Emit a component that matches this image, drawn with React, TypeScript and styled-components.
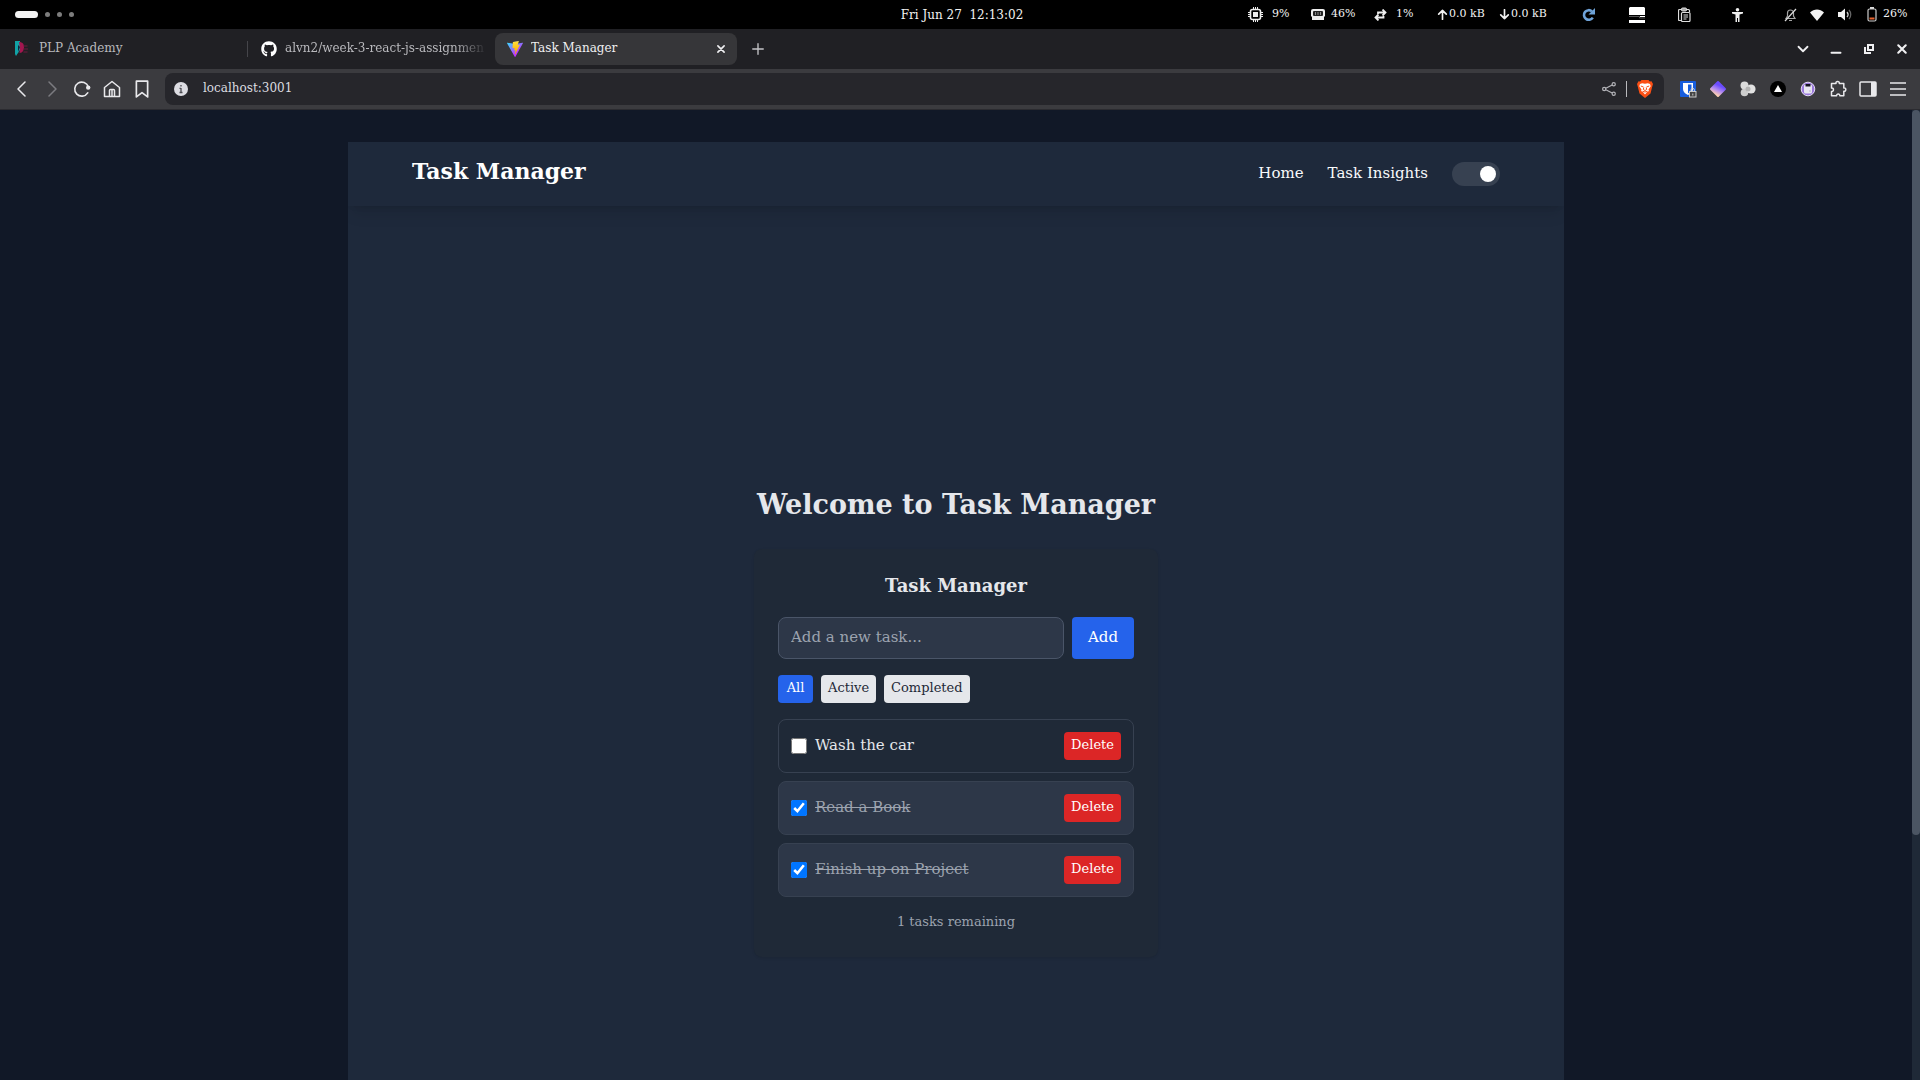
import React, { useEffect, useRef, useState } from "react";
import styled, { createGlobalStyle, css } from "styled-components";
import { FaGithub } from "react-icons/fa";

const GlobalStyle = createGlobalStyle`
  *, *::before, *::after { box-sizing: border-box; }
  body { margin: 0; background: #111827; }
  body, button, input {
    font-family: "DejaVu Serif", "Liberation Serif", serif;
  }
  button { border: 0; padding: 0; background: none; color: inherit; cursor: pointer; }
  a { color: inherit; text-decoration: none; }
  h1, h2, p, ul { margin: 0; padding: 0; }
  svg { display: block; flex: none; }
`;

/* ---------- desktop shell ---------- */

const Shell = styled.div`
  display: flex;
  flex-direction: column;
  height: 100vh;
  overflow: hidden;
`;

const SystemBar = styled.header`
  display: grid;
  grid-template-columns: 1fr auto 1fr;
  align-items: center;
  height: 29px;
  flex: none;
  padding: 0 11px 0 15px;
  background: #000;
  color: #f2f2f2;
`;

const Workspaces = styled.div`
  display: flex;
  align-items: center;
  gap: 7px;
`;

const Workspace = styled.span<{ $current?: boolean }>`
  width: ${(p) => (p.$current ? "23px" : "5px")};
  height: ${(p) => (p.$current ? "7px" : "5px")};
  border-radius: 4px;
  background: ${(p) => (p.$current ? "#f2f2f2" : "#7d7d7d")};
`;

const Clock = styled.time`
  font-size: 12px;
  line-height: 16px;
  white-space: pre;
`;

const StatusArea = styled.div`
  display: grid;
  justify-content: end;
  align-items: center;
  grid-template-columns: 63px 63px 63px 62px 83px 47px 49px 54px 52px 26px 28px 29px 42px;
`;

const Status = styled.span<{ $gap?: number }>`
  display: flex;
  align-items: center;
  gap: ${(p) => p.$gap ?? 6}px;
  font-size: 11px;
  line-height: 16px;
  white-space: nowrap;
`;

const StatusText = styled.span`
  padding-bottom: 2px;
`;

/* ---------- browser chrome ---------- */

const TabStrip = styled.nav`
  display: flex;
  align-items: center;
  height: 40px;
  flex: none;
  padding-right: 8px;
  background: #202024;
  color: #b9b9bd;
`;

const Tab = styled.div<{ $active?: boolean; $divided?: boolean }>`
  display: flex;
  align-items: center;
  gap: 8px;
  width: 247px;
  height: 32px;
  padding: 0 8px 0 13px;
  ${(p) =>
    p.$divided &&
    css`
      width: 248px;
      padding-left: 14px;
      background: linear-gradient(#45454a, #45454a) right center / 1px 16px no-repeat;
    `}
  ${(p) =>
    p.$active &&
    css`
      width: 242px;
      padding: 0 11px 0 12px;
      border-radius: 8px;
      background: #363639;
      color: #f0f0f2;
    `}
`;

const TabTitle = styled.a<{ $faded?: boolean }>`
  flex: 1;
  min-width: 0;
  overflow: hidden;
  white-space: nowrap;
  padding-bottom: 3px;
  font-size: 12px;
  line-height: 16px;
  ${(p) =>
    p.$faded &&
    css`
      mask-image: linear-gradient(to right, #000 84%, transparent 100%);
    `}
`;

const IconButton = styled.button<{ $size?: number }>`
  display: grid;
  place-items: center;
  flex: none;
  width: ${(p) => p.$size ?? 30}px;
  height: 24px;
`;

const CloseTab = styled(IconButton)`
  width: 10px;
`;

const NewTab = styled(IconButton)`
  margin-left: 6px;
  color: #c4c4c8;
`;

const WindowControls = styled.div`
  display: flex;
  gap: 3px;
  margin-left: auto;
  margin-right: -5px;
  color: #f0f0f2;
`;

const Toolbar = styled.div`
  display: flex;
  align-items: center;
  height: 41px;
  flex: none;
  padding: 0 7px;
  border-bottom: 1px solid #2b2b30;
  background: #3b3b3f;
  color: #e9e9ec;
`;

const AddressBar = styled.label`
  display: flex;
  align-items: center;
  flex: 1;
  height: 32px;
  margin: 0 9px 0 8px;
  padding: 0 10px 0 9px;
  border-radius: 8px;
  background: #26262b;
`;

const AddressInput = styled.input`
  flex: 1;
  min-width: 0;
  margin-left: 15px;
  padding: 0 0 3px;
  border: 0;
  outline: 0;
  background: none;
  color: #dcdce0;
  font-size: 12px;
  line-height: 20px;
`;

const AddressDivider = styled.span`
  width: 1px;
  height: 16px;
  margin: 0 9px 0 2px;
  background: #b9b9bd;
`;

const PageArea = styled.div`
  display: flex;
  flex: 1;
  min-height: 0;
`;

const Viewport = styled.div`
  flex: 1;
  overflow-y: auto;
  scrollbar-width: none;
  background: #111827;
`;

const ScrollTrack = styled.div`
  width: 8px;
  flex: none;
  background: #1f2937;
`;

const ScrollThumb = styled.div`
  height: 75%;
  border-radius: 4px;
  background: #4b5563;
`;

/* ---------- task manager page ---------- */

const Page = styled.div`
  max-width: 1280px;
  margin: 0 auto;
  padding: 32px 32px 167px;
`;

const Panel = styled.div`
  overflow: hidden;
  background: #1e293b;
`;

const NavBar = styled.header`
  display: flex;
  align-items: center;
  justify-content: space-between;
  height: 64px;
  padding: 0 64px;
  background: #1e293b;
  box-shadow: 0 10px 15px -3px rgba(0, 0, 0, 0.1), 0 4px 6px -4px rgba(0, 0, 0, 0.1);
  color: #fff;
`;

const Brand = styled.a`
  padding-bottom: 6px;
  font-size: 22px;
  font-weight: 700;
  line-height: 32px;
`;

const NavLinks = styled.nav`
  display: flex;
  align-items: center;
  gap: 24px;
`;

const NavLink = styled.a`
  padding-bottom: 2px;
  font-size: 15px;
  line-height: 24px;
  color: #f8fafc;
`;

const ThemeToggle = styled.input`
  appearance: none;
  display: flex;
  align-items: center;
  width: 48px;
  height: 24px;
  margin: 0;
  padding: 4px;
  border-radius: 12px;
  background: #374151;
  cursor: pointer;

  &::before {
    content: "";
    width: 16px;
    height: 16px;
    border-radius: 50%;
    background: #fff;
  }
  &:checked::before {
    margin-left: auto;
  }
`;

const Main = styled.main`
  box-sizing: content-box;
  display: flex;
  align-items: center;
  justify-content: center;
  min-height: calc(100vh - 110px);
  padding: 32px 0;
`;

const Welcome = styled.section`
  display: flex;
  flex-direction: column;
  gap: 24px;
  width: 404px;
  color: #e5e7eb;
`;

const PageTitle = styled.h1`
  padding-bottom: 4px;
  font-size: 27px;
  line-height: 32px;
  text-align: center;
  white-space: nowrap;
`;

const Card = styled.section`
  padding: 24px;
  border-radius: 8px;
  background: #1f2937;
  box-shadow: 0 1px 3px rgba(0, 0, 0, 0.1);
`;

const CardTitle = styled.h2`
  margin-bottom: 16px;
  padding-bottom: 2px;
  font-size: 18px;
  line-height: 26px;
  text-align: center;
`;

const AddForm = styled.form`
  display: flex;
  gap: 8px;
  margin-bottom: 16px;
`;

const TaskInput = styled.input`
  flex: 1;
  min-width: 0;
  height: 42px;
  padding: 0 12px 2px;
  border: 1px solid #4a5568;
  border-radius: 8px;
  outline: 0;
  background: #2d3748;
  color: #e5e7eb;
  font-size: 15px;

  &::placeholder {
    color: #9ca3af;
    opacity: 1;
  }
`;

const AddButton = styled.button`
  padding: 0 16px 2px;
  border-radius: 4px;
  background: #2563eb;
  color: #fff;
  font-size: 15px;
`;

const Filters = styled.div`
  display: flex;
  gap: 8px;
  margin-bottom: 16px;
`;

const SmallButton = styled.button<{ $tone: "primary" | "neutral" | "danger" }>`
  min-width: 35px;
  height: 28px;
  padding: 0 7px 2px;
  border-radius: 4px;
  font-size: 13px;
  line-height: 20px;
  background: ${(p) => ({ primary: "#2563eb", neutral: "#e5e7eb", danger: "#dc2626" })[p.$tone]};
  color: ${(p) => (p.$tone === "neutral" ? "#1f2937" : "#fff")};
`;

const TaskList = styled.ul`
  display: flex;
  flex-direction: column;
  gap: 8px;
  list-style: none;
`;

const TaskRow = styled.li<{ $done: boolean }>`
  display: flex;
  align-items: center;
  justify-content: space-between;
  padding: 12px;
  border: 1px solid #374151;
  border-radius: 8px;
  background: ${(p) => (p.$done ? "#2d3748" : "transparent")};
`;

const TaskLabel = styled.label<{ $done: boolean }>`
  display: flex;
  align-items: center;
  gap: 8px;
  font-size: 15px;
  line-height: 20px;
  color: ${(p) => (p.$done ? "#9ca3af" : "#e5e7eb")};
`;

const TaskName = styled.span<{ $done: boolean }>`
  padding-bottom: 2px;
  text-decoration: ${(p) => (p.$done ? "line-through" : "none")};
`;

const TaskCheck = styled.input`
  width: 16px;
  height: 16px;
  margin: 0;
  accent-color: #0075ff;
`;

const Remaining = styled.p`
  margin-top: 16px;
  padding-bottom: 2px;
  color: #9ca3af;
  font-size: 13px;
  line-height: 18px;
  text-align: center;
`;

/* ---------- drawings ---------- */

type LineProps = { d: string; size?: number; width?: number; color?: string };

/* Stroked glyph on a 16-unit grid. */
const Line = ({ d, size = 16, width = 1.5, color = "currentColor" }: LineProps) => (
  <svg width={size} height={size} viewBox="0 0 16 16" fill="none" stroke={color} strokeWidth={width} strokeLinecap="round" strokeLinejoin="round">
    <path d={d} />
  </svg>
);

const PlpLogo = () => (
  <svg width="17" height="16" viewBox="0 0 17 16">
    <path d="M1 0h5v9L2 15 1 13z" fill="#12a3a6" />
    <path d="M5 1c4 0 5 2.500 5 5s-1 6-4.500 6l.5-5z" fill="#a3164f" />
    <path d="M4 4l2 2-2 5z" fill="#17213a" />
    <path d="M9.500 5h4M9.500 8h4.500M9.500 11h4" stroke="#6c1a3e" />
  </svg>
);

const ViteLogo = () => (
  <svg width="16" height="16" viewBox="0 0 256 257">
    <defs>
      <linearGradient id="viteBody" x1="0" x2="0.57" y1="0.08" y2="0.78">
        <stop offset="0" stopColor="#41d1ff" />
        <stop offset="1" stopColor="#bd34fe" />
      </linearGradient>
      <linearGradient id="viteBolt" x1="0.43" x2="0.5" y1="0.02" y2="0.9">
        <stop offset="0" stopColor="#ffea83" />
        <stop offset="0.08" stopColor="#ffdd35" />
        <stop offset="1" stopColor="#ffa800" />
      </linearGradient>
    </defs>
    <path fill="url(#viteBody)" d="M255.153 37.938L134.897 252.976c-2.483 4.44-8.862 4.466-11.382.048L.875 37.958c-2.746-4.814 1.371-10.646 6.827-9.67l120.385 21.517a6.537 6.537 0 0 0 2.322-.004l117.867-21.483c5.438-.991 9.574 4.796 6.877 9.62Z" />
    <path fill="url(#viteBolt)" d="M185.432.063L96.44 17.501a3.268 3.268 0 0 0-2.634 3.014l-5.474 92.456a3.268 3.268 0 0 0 3.997 3.378l24.777-5.718c2.318-.535 4.413 1.507 3.936 3.838l-7.361 36.047c-.495 2.426 1.782 4.5 4.151 3.78l15.304-4.649c2.372-.72 4.652 1.36 4.15 3.788l-11.698 56.621c-.732 3.542 3.979 5.473 5.943 2.437l1.313-2.028l72.516-144.72c1.215-2.423-.88-5.186-3.54-4.672l-25.505 4.922c-2.396.462-4.435-1.77-3.759-4.114l16.646-57.705c.677-2.35-1.37-4.583-3.769-4.113Z" />
  </svg>
);

const ChipIcon = () => (
  <svg width="15" height="15" viewBox="0 0 15 15" fill="none" stroke="#eee">
    <path d="M5.5 0v3M7.5 0v3M9.5 0v3M5.5 12v3M7.5 12v3M9.5 12v3M0 5.5h3M0 7.5h3M0 9.5h3M12 5.5h3M12 7.5h3M12 9.5h3" />
    <rect x="2.5" y="2.5" width="10" height="10" rx="2" strokeWidth="1.6" />
    <rect x="5.5" y="5.5" width="4" height="4" fill="#eee" />
  </svg>
);

const MemoryIcon = () => (
  <svg width="14" height="12" viewBox="0 0 14 12" fill="none">
    <path d="M2 0h10a2 2 0 0 1 2 2v5l-1 1v3H1V8L0 7V2a2 2 0 0 1 2-2z" fill="#eee" />
    <rect x="2" y="2" width="10" height="5" rx="1" fill="#222" />
    <path d="M4.5 3v3M7 3v3M9.5 3v3" stroke="#888" />
  </svg>
);

const SwapIcon = () => (
  <svg width="13" height="12" viewBox="0 0 13 12" fill="none" stroke="#eee" strokeWidth="1.8">
    <path d="M4 5V3.500h7.500M8.500 0.500l3 3-3 3M9.500 7v1.500H2M4.500 5.500l-3 3 3 3" />
  </svg>
);

const RefreshIcon = () => (
  <svg width="14" height="14" viewBox="0 0 14 14">
    <path d="M10.800 9.600A4.800 4.800 0 1 1 10 3.400" fill="none" stroke="#6fa3d8" strokeWidth="2.600" />
    <path d="M13 0v6.500H6.500z" fill="#6fa3d8" />
  </svg>
);

const DriveIcon = () => (
  <svg width="16" height="16" viewBox="0 0 16 16">
    <path d="M1 0h14l1 1v7H0V1zM0 13h16v3H0z" fill="#fff" />
    <path d="M0 9.500h10.500v1.500H16" fill="none" stroke="#555" />
    <path d="M11 9h5v1h-5z" fill="#fff" />
  </svg>
);

const ClipboardIcon = () => (
  <svg width="13" height="15" viewBox="0 0 13 15" fill="none" stroke="#ddd">
    <path d="M3.500 2.500h-2a1 1 0 0 0-1 1v9a1 1 0 0 0 1 1h1.500M9 2.500h1.500a1 1 0 0 1 1 1V5" strokeWidth="1.200" />
    <rect x="3.500" y="1" width="5" height="3" rx="1" fill="#aaa" />
    <rect x="3.500" y="5.500" width="8.500" height="9" rx="1" strokeWidth="1.200" />
    <path d="M5.500 8h4.500M5.500 10h4.500M5.500 12h3" />
  </svg>
);

const AccessIcon = () => (
  <svg width="11" height="14" viewBox="0 0 11 14" fill="#eee">
    <circle cx="5.500" cy="1.800" r="1.800" />
    <path d="M0 4h11v1.500L7.500 6.500V14H6v-4H5v4H3.500V6.500L0 5.500z" />
  </svg>
);

const BellOffIcon = () => (
  <svg width="13" height="14" viewBox="0 0 13 14" fill="none" stroke="#a5a5a5" strokeWidth="1.200">
    <path d="M2 10.500h9L9.500 8V5a3 3 0 0 0-6 0v3zM5 12.500h3" />
    <path d="M1 13L12 1" stroke="#ddd" />
  </svg>
);

const WifiIcon = () => (
  <svg width="14" height="12" viewBox="0 0 14 12">
    <path d="M0 3.500C4 -.6 10 -.6 14 3.500L7 12z" fill="#f2f2f2" />
  </svg>
);

const VolumeIcon = () => (
  <svg width="14" height="13" viewBox="0 0 14 13" fill="none">
    <path d="M0 4h3l4-3.500v12L3 9H0z" fill="#f2f2f2" />
    <path d="M9 4c1.300 1.500 1.300 3.500 0 5" stroke="#ccc" strokeWidth="1.300" />
    <path d="M11 2c2.300 2.500 2.300 6.500 0 9" stroke="#666" strokeWidth="1.300" />
  </svg>
);

const BatteryIcon = () => (
  <svg width="10" height="15" viewBox="0 0 10 15" fill="none">
    <path d="M3 1h4" stroke="#ddd" strokeWidth="2" />
    <rect x="1" y="2" width="8" height="12" rx="1.500" stroke="#ccc" strokeWidth="1.200" />
    <rect x="2.500" y="10.500" width="5" height="2" fill="#e8622c" />
  </svg>
);

const ReloadIcon = () => (
  <svg width="18" height="18" viewBox="0 0 18 18" fill="none">
    <path d="M14.700 12.800A7 7 0 1 1 15.400 7" stroke="currentColor" strokeWidth="1.600" strokeLinecap="round" />
    <circle cx="15.200" cy="7.600" r="2.200" fill="currentColor" />
  </svg>
);

const HomeIcon = () => (
  <svg width="18" height="18" viewBox="0 0 18 18" fill="none" stroke="currentColor" strokeWidth="1.500" strokeLinejoin="round">
    <path d="M1.500 7.500L9 1.500l7.500 6v9h-15z" />
    <path d="M6.500 16.500V10.500a1 1 0 0 1 1-1h3a1 1 0 0 1 1 1v6M9 10v6.500" />
  </svg>
);

const InfoIcon = () => (
  <svg width="14" height="14" viewBox="0 0 14 14">
    <circle cx="7" cy="7" r="7" fill="#dcdce2" />
    <path d="M7 6v4.500M5.500 6.300H7M5.500 10.500h3M7 3v1.500" stroke="#4a4a50" strokeWidth="1.300" />
  </svg>
);

const ShareIcon = () => (
  <svg width="14" height="14" viewBox="0 0 14 14" fill="none" stroke="#b4b4b9" strokeWidth="1.200">
    <circle cx="2.200" cy="7" r="1.600" />
    <circle cx="11.700" cy="2.300" r="1.600" />
    <circle cx="11.700" cy="11.700" r="1.600" />
    <path d="M3.800 6.200L10.200 3M3.800 7.800l6.400 3.200" />
  </svg>
);

const BraveIcon = () => (
  <svg width="16" height="18" viewBox="0 0 16 18">
    <path d="M4.500 0h7l1.300 1.500L14.500 1.300 16 4l-.6 2L13.500 13.500 8 18l-5.500-4.500L.6 6 0 4l1.500-2.700 1.700.2z" fill="#fb4f14" />
    <path d="M3 4l2.200-.8 2.800.6 2.800-.6L13 4l.7 2.200-2.200 3.300.4 1.600-2 1.200L8 14.500l-1.900-2.200-2-1.200.4-1.600-2.200-3.300z" fill="#fff" />
    <path d="M3.800 6l2.700 1M12.200 6L9.500 7M6.800 7.500L6.300 9.500 8 10.500l1.700-1-.5-2M5.500 11.300L8 12l2.500-.7" stroke="#fb4f14" strokeWidth="1" fill="none" />
  </svg>
);

const VaultIcon = () => (
  <svg width="17" height="17" viewBox="0 0 17 17">
    <rect width="16" height="16" rx="1" fill="#175ddc" />
    <path d="M3 2h10v6c0 3-2.500 5-5 6-2.500-1-5-3-5-6z" fill="#fff" />
    <path d="M8 3.500h3.500V8c0 2-1.500 3.300-3.500 4.300z" fill="#175ddc" />
    <rect x="9.500" y="10.500" width="6.500" height="5.500" fill="#444" stroke="#ccc" />
    <path d="M11 10.500V9a1.700 1.700 0 0 1 3.400 0v1.500" fill="none" stroke="#ccc" />
    <path d="M12.800 12.500v2" stroke="#ccc" />
  </svg>
);

const DiamondIcon = () => (
  <svg width="18" height="18" viewBox="0 0 18 18">
    <defs>
      <linearGradient id="gem" x1="0.700" x2="0.300" y1="0.100" y2="0.900">
        <stop offset="0.200" stopColor="#6a4bff" />
        <stop offset="0.600" stopColor="#b48cf0" />
        <stop offset="1" stopColor="#ffd0b0" />
      </linearGradient>
    </defs>
    <path d="M9 2L16 9 9 16 2 9z" fill="url(#gem)" stroke="url(#gem)" strokeWidth="2" strokeLinejoin="round" />
  </svg>
);

const BlobsIcon = () => (
  <svg width="16" height="16" viewBox="0 0 16 16">
    <circle cx="4.500" cy="4.500" r="4" fill="#dcdcdc" />
    <circle cx="4.500" cy="11.500" r="3.800" fill="#cdcdcd" />
    <circle cx="11" cy="8" r="4.600" fill="#e2e2e2" />
    <circle cx="8" cy="8" r="2.500" fill="#b4b4b4" />
  </svg>
);

const TriangleIcon = () => (
  <svg width="16" height="16" viewBox="0 0 16 16">
    <circle cx="8" cy="8" r="8" fill="#000" />
    <path d="M8 4l4 7H4z" fill="#fff" />
  </svg>
);

const RobotIcon = () => (
  <svg width="16" height="16" viewBox="0 0 16 16">
    <circle cx="8" cy="8" r="6.800" fill="#9a78dc" stroke="#e4dcf6" />
    <rect x="4" y="3.500" width="8" height="9" rx="1.500" fill="#e8e6f2" />
    <rect x="5.500" y="3" width="5" height="2.500" fill="#15131f" />
    <path d="M9 10h2" stroke="#b8b3cc" />
  </svg>
);

const PuzzleIcon = () => (
  <svg width="18" height="18" viewBox="0 0 18 18" fill="none" stroke="currentColor" strokeWidth="1.500" strokeLinejoin="round">
    <path d="M2.500 3.500H7c-.8-2.800 4-2.800 3.300 0h4.500V8c2.700-.7 2.700 3.800 0 3.200v4.600h-4c.5-2.300-3.600-2.300-3.200 0H2.500v-4.300c2.600.4 2.600-4 0-3.500z" />
  </svg>
);

const SidebarIcon = () => (
  <svg width="18" height="16" viewBox="0 0 18 16">
    <rect x="1" y="1" width="16" height="14" rx="1" fill="none" stroke="currentColor" strokeWidth="1.500" />
    <path d="M12 1h5v14h-5z" fill="currentColor" />
  </svg>
);

const MenuIcon = () => (
  <svg width="16" height="14" viewBox="0 0 16 14" stroke="currentColor" strokeWidth="1.500">
    <path d="M0 1h16M0 7h16M0 13h16" />
  </svg>
);

const RestoreIcon = () => (
  <svg width="10" height="10" viewBox="0 0 10 10" fill="none" stroke="currentColor" strokeWidth="2">
    <path d="M4 1h5v5H4zM1 3v6h6" />
  </svg>
);

/* ---------- app ---------- */

type Filter = "All" | "Active" | "Completed";
type Task = { id: number; name: string; done: boolean };

const filters: Filter[] = ["All", "Active", "Completed"];

const initialTasks: Task[] = [
  { id: 1, name: "Wash the car", done: false },
  { id: 2, name: "Read a Book", done: true },
  { id: 3, name: "Finish up on Project", done: true },
];

const extensions = [
  { name: "Password vault", icon: <VaultIcon /> },
  { name: "Diamond", icon: <DiamondIcon /> },
  { name: "Blobs", icon: <BlobsIcon /> },
  { name: "Triangle", icon: <TriangleIcon /> },
  { name: "Robot", icon: <RobotIcon /> },
  { name: "Extensions", icon: <PuzzleIcon /> },
  { name: "Sidebar", icon: <SidebarIcon /> },
  { name: "Menu", icon: <MenuIcon /> },
];

function TaskManager() {
  const [tasks, setTasks] = useState(initialTasks);
  const [filter, setFilter] = useState<Filter>("All");
  const [draft, setDraft] = useState("");

  const visible = tasks.filter((t) => filter === "All" || t.done === (filter === "Completed"));

  const add = (e: React.FormEvent) => {
    e.preventDefault();
    if (!draft.trim()) return;
    setTasks([...tasks, { id: Date.now(), name: draft.trim(), done: false }]);
    setDraft("");
  };

  const toggle = (id: number) => setTasks(tasks.map((t) => (t.id === id ? { ...t, done: !t.done } : t)));

  return (
    <Card>
      <CardTitle>Task Manager</CardTitle>
      <AddForm onSubmit={add}>
        <TaskInput aria-label="New task" placeholder="Add a new task..." value={draft} onChange={(e) => setDraft(e.target.value)} />
        <AddButton type="submit">Add</AddButton>
      </AddForm>
      <Filters>
        {filters.map((f) => (
          <SmallButton key={f} type="button" $tone={f === filter ? "primary" : "neutral"} onClick={() => setFilter(f)}>
            {f}
          </SmallButton>
        ))}
      </Filters>
      <TaskList>
        {visible.map((t) => (
          <TaskRow key={t.id} $done={t.done}>
            <TaskLabel $done={t.done}>
              <TaskCheck type="checkbox" checked={t.done} onChange={() => toggle(t.id)} />
              <TaskName $done={t.done}>{t.name}</TaskName>
            </TaskLabel>
            <SmallButton type="button" $tone="danger" onClick={() => setTasks(tasks.filter((x) => x.id !== t.id))}>
              Delete
            </SmallButton>
          </TaskRow>
        ))}
      </TaskList>
      <Remaining>{tasks.filter((t) => !t.done).length} tasks remaining</Remaining>
    </Card>
  );
}

export default function App() {
  const view = useRef<HTMLDivElement>(null);
  const [scroll, setScroll] = useState({ size: 75, top: 0 });

  const measure = () => {
    const el = view.current;
    if (!el) return;
    setScroll({
      size: (el.clientHeight / el.scrollHeight) * 100,
      top: (el.scrollTop / el.scrollHeight) * el.clientHeight,
    });
  };

  useEffect(() => {
    measure();
    window.addEventListener("resize", measure);
    return () => window.removeEventListener("resize", measure);
  }, []);

  return (
    <Shell>
      <GlobalStyle />
      <SystemBar>
        <Workspaces>
          <Workspace $current />
          <Workspace />
          <Workspace />
          <Workspace />
        </Workspaces>
        <Clock>{"Fri Jun 27  12:13:02"}</Clock>
        <StatusArea>
          <Status $gap={9}><ChipIcon /><StatusText>9%</StatusText></Status>
          <Status><MemoryIcon /><StatusText>46%</StatusText></Status>
          <Status $gap={9}><SwapIcon /><StatusText>1%</StatusText></Status>
          <Status $gap={1}><Line size={11} width={2.4} d="M8 15V2M2.500 7.500L8 2l5.500 5.500" /><StatusText>0.0 kB</StatusText></Status>
          <Status $gap={1}><Line size={11} width={2.4} d="M8 1v13M2.500 8.500L8 14l5.500-5.500" /><StatusText>0.0 kB</StatusText></Status>
          <Status><RefreshIcon /></Status>
          <Status><DriveIcon /></Status>
          <Status><ClipboardIcon /></Status>
          <Status><AccessIcon /></Status>
          <Status><BellOffIcon /></Status>
          <Status><WifiIcon /></Status>
          <Status><VolumeIcon /></Status>
          <Status><BatteryIcon /><StatusText>26%</StatusText></Status>
        </StatusArea>
      </SystemBar>

      <TabStrip aria-label="Tabs">
        <Tab $divided>
          <PlpLogo />
          <TabTitle href="#plp">PLP Academy</TabTitle>
        </Tab>
        <Tab>
          <FaGithub size={16} color="#fff" />
          <TabTitle href="#github" $faded>alvn2/week-3-react-js-assignmen</TabTitle>
        </Tab>
        <Tab $active>
          <ViteLogo />
          <TabTitle href="#tasks">Task Manager</TabTitle>
          <CloseTab aria-label="Close tab"><Line size={10} width={2.6} d="M3 3l10 10M13 3L3 13" /></CloseTab>
        </Tab>
        <NewTab aria-label="New tab"><Line size={12} width={1.8} d="M8 1v14M1 8h14" /></NewTab>
        <WindowControls>
          <IconButton aria-label="Search tabs"><Line size={12} width={2.4} d="M2 5l6 6 6-6" /></IconButton>
          <IconButton aria-label="Minimize"><Line size={12} width={2.6} d="M2 13h12" /></IconButton>
          <IconButton aria-label="Restore"><RestoreIcon /></IconButton>
          <IconButton aria-label="Close window"><Line size={12} width={2.8} d="M3 3l10 10M13 3L3 13" /></IconButton>
        </WindowControls>
      </TabStrip>

      <Toolbar>
        <IconButton aria-label="Back"><Line d="M11 1L4 8l7 7" /></IconButton>
        <IconButton aria-label="Forward"><Line color="#7b7b80" d="M5 1l7 7-7 7" /></IconButton>
        <IconButton aria-label="Reload"><ReloadIcon /></IconButton>
        <IconButton aria-label="Home"><HomeIcon /></IconButton>
        <IconButton aria-label="Bookmark"><Line size={18} d="M3 1h10v14l-5-3.800L3 15z" /></IconButton>
        <AddressBar>
          <InfoIcon />
          <AddressInput aria-label="Address" defaultValue="localhost:3001" />
          <IconButton type="button" aria-label="Share"><ShareIcon /></IconButton>
          <AddressDivider />
          <IconButton type="button" $size={18} aria-label="Brave Shields"><BraveIcon /></IconButton>
        </AddressBar>
        {extensions.map((x) => (
          <IconButton key={x.name} aria-label={x.name}>{x.icon}</IconButton>
        ))}
      </Toolbar>

      <PageArea>
        <Viewport ref={view} onScroll={measure}>
          <Page>
            <Panel>
              <NavBar>
                <Brand href="#home">Task Manager</Brand>
                <NavLinks>
                  <NavLink href="#home">Home</NavLink>
                  <NavLink href="#insights">Task Insights</NavLink>
                  <ThemeToggle type="checkbox" aria-label="Dark mode" defaultChecked />
                </NavLinks>
              </NavBar>
              <Main>
                <Welcome>
                  <PageTitle>Welcome to Task Manager</PageTitle>
                  <TaskManager />
                </Welcome>
              </Main>
            </Panel>
          </Page>
        </Viewport>
        <ScrollTrack>
          <ScrollThumb style={{ height: `${scroll.size}%`, marginTop: scroll.top }} />
        </ScrollTrack>
      </PageArea>
    </Shell>
  );
}
